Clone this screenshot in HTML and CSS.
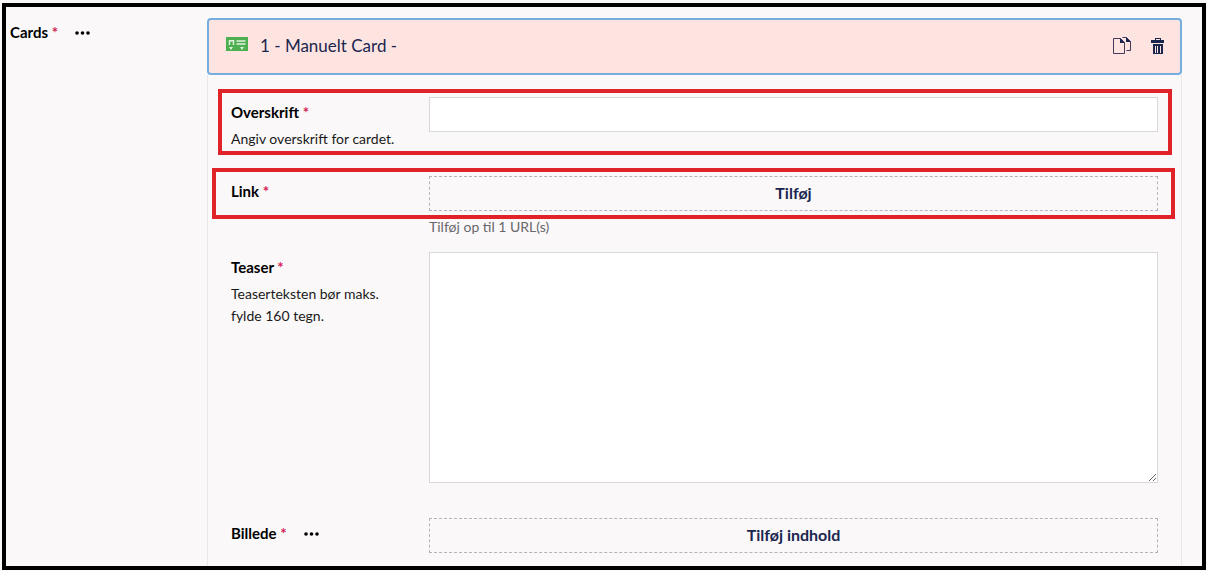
FILE: index.html
```html
<!DOCTYPE html>
<html lang="da">
<head>
  <meta charset="UTF-8" />
  <meta name="viewport" content="width=device-width, initial-scale=1.0"/>
  <title>Cards</title>
  <link rel="stylesheet" href="styles.css">
</head>
<body>
  <main class="frame">
    <div class="property-label">
      <h1 class="label">Cards <span class="required">*</span></h1>
      <button type="button" class="more-button" aria-label="Flere handlinger">
        <svg width="15" height="4" viewBox="0 0 15 4"><circle cx="2" cy="2" r="1.8"/><circle cx="7.5" cy="2" r="1.8"/><circle cx="13" cy="2" r="1.8"/></svg>
      </button>
    </div>

    <section class="block">
      <header class="block-header">
        <svg class="block-icon" width="22" height="14" viewBox="0 0 22 14">
          <path fill="#4caf50" d="M0 0h22v14H0z"/>
          <path fill="none" stroke="#e3f1dc" stroke-width="1.5" d="M3.5 8V3.7h4V8M10.5 4h9M10.5 7h9"/>
          <path fill="#e3f1dc" d="M3 10h4l-2 3zM14 10h4l-2 3z"/>
        </svg>
        <h2 class="block-title">1 - Manuelt Card -</h2>
        <button type="button" class="icon-button" aria-label="Kopier">
          <svg width="18" height="18" viewBox="0 0 18 18">
            <path fill="none" stroke="#45385f" d="M.5 1.5h7l4 4v11H.5zM9.5.5h4l4 4v9h-4"/>
            <path fill="#1b264f" d="M7 1l5 5H7zM13 0l5 5h-5z"/>
          </svg>
        </button>
        <button type="button" class="icon-button" aria-label="Slet">
          <svg width="14" height="18" viewBox="0 0 14 18">
            <path fill="#1b264f" fill-rule="evenodd" d="M4 1h6v2h3v3H0V3h4zM5 2v1h4V2zM2 7h10v10H2zM4 9v7h1V9zM6 9v7h1V9zM9 9v7h1V9z"/>
          </svg>
        </button>
      </header>

      <form class="block-content">
        <div class="row">
          <div class="row-label">
            <label class="label" for="overskrift">Overskrift <span class="required">*</span></label>
            <p class="description">Angiv overskrift for cardet.</p>
          </div>
          <div class="control">
            <input type="text" id="overskrift" class="text-input" />
          </div>
          <span class="highlight highlight-title"></span>
        </div>

        <div class="row">
          <div class="row-label">
            <label class="label" for="link">Link <span class="required">*</span></label>
          </div>
          <div class="control">
            <button type="button" id="link" class="add-button">Tilføj</button>
            <p class="hint">Tilføj op til 1 URL(s)</p>
          </div>
          <span class="highlight highlight-link"></span>
        </div>

        <div class="row">
          <div class="row-label">
            <label class="label" for="teaser">Teaser <span class="required">*</span></label>
            <p class="description">Teaserteksten bør maks. fylde 160 tegn.</p>
          </div>
          <div class="control control-teaser">
            <textarea id="teaser" class="text-input text-area"></textarea>
          </div>
        </div>

        <div class="row">
          <div class="row-label">
            <div class="label-line">
              <label class="label" for="billede">Billede <span class="required">*</span></label>
              <button type="button" class="more-button" aria-label="Flere handlinger">
                <svg width="15" height="4" viewBox="0 0 15 4"><circle cx="2" cy="2" r="1.8"/><circle cx="7.5" cy="2" r="1.8"/><circle cx="13" cy="2" r="1.8"/></svg>
              </button>
            </div>
          </div>
          <div class="control">
            <button type="button" id="billede" class="add-button">Tilføj indhold</button>
          </div>
        </div>
      </form>
    </section>
  </main>
</body>
</html>
```

FILE: styles.css
```css
* { margin: 0; padding: 0; box-sizing: border-box; }

body {
  font-family: Lato, 'Open Sans', sans-serif;
  font-size: 14px;
  line-height: 22px;
  color: #000;
  background-color: #faf8f9;
  height: 100vh;
  padding: 3px 1px 1px 2px;
}

button { font-family: inherit; cursor: pointer; }

.frame {
  display: grid;
  grid-template-columns: 197px 1fr;
  height: 100%;
  padding: 11px 20px 0 4px;
  border: 4px solid #000;
  overflow: hidden;
}

.property-label,
.label-line {
  display: flex;
  align-items: flex-start;
  gap: 17px;
}

.property-label { padding-top: 3px; }

.label {
  display: block;
  font-size: 15px;
  font-weight: 700;
  line-height: 22px;
}

.required { color: #d42054; }

.more-button {
  display: flex;
  align-items: center;
  height: 24px;
  border: none;
  background: none;
}

.block {
  display: flex;
  flex-direction: column;
  min-width: 0;
}

.block-header {
  display: flex;
  align-items: center;
  gap: 20px;
  height: 57px;
  padding: 0 15px 2px 17px;
  border: 2px solid #75aede;
  border-radius: 4px;
  background-color: #fee4e1;
  flex-shrink: 0;
}

.block-icon { margin-bottom: 4px; }

.block-title {
  flex: 1;
  margin-left: -8px;
  font-size: 17px;
  font-weight: 400;
  color: #1b264f;
}

.icon-button {
  display: flex;
  border: none;
  background: none;
}

.block-content {
  display: flex;
  flex-direction: column;
  gap: 14px;
  flex: 1;
  padding: 22px 23px 0;
  border: 1px solid #e9e7ea;
  border-width: 0 1px;
}

.row {
  position: relative;
  display: grid;
  grid-template-columns: 198px 1fr;
}

.row-label { padding: 4px 30px 12px 0; }
.description { margin-top: 5px; color: #1a1a1a; }
.control-teaser { padding-bottom: 21px; }

.text-input {
  display: block;
  width: 100%;
  height: 35px;
  padding: 4px 8px;
  border: 1px solid #d8d7d9;
  background-color: #fff;
  font: inherit;
}

.text-area {
  height: 231px;
  resize: vertical;
}

.add-button {
  display: block;
  width: 100%;
  height: 35px;
  padding-bottom: 3px;
  border: 1px dashed #b5b3b8;
  background: none;
  color: #1b264f;
  font-size: 16px;
  font-weight: 700;
}

.hint {
  margin-top: 5px;
  color: #68676b;
}

/* red marker boxes on top of the rows */
.highlight {
  position: absolute;
  border: 4px solid #e02229;
  pointer-events: none;
}

.highlight-title { inset: -8px -14px 7px -13px; }
.highlight-link { inset: -8px -17px 19px -19px; }
```
